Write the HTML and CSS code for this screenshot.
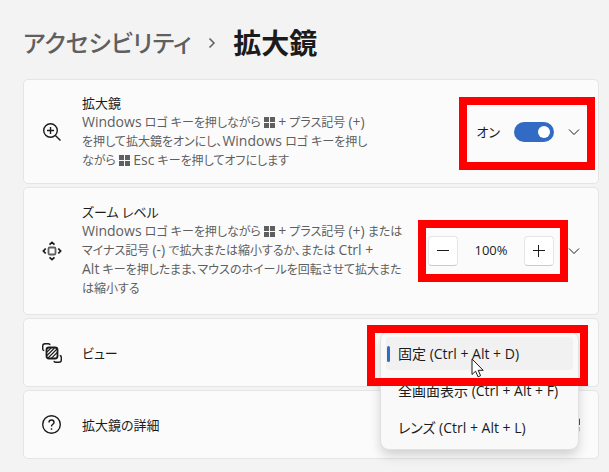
FILE: index.html
```html
<!DOCTYPE html>
<html lang="ja">

<head>
  <meta charset="utf-8">
  <title>拡大鏡</title>
  <meta name="viewport" content="width=device-width, initial-scale=1">
  <link rel="stylesheet" href="styles.css">
</head>

<body>
  <header class="breadcrumb">
    <a href="#">アクセシビリティ</a>
    <svg width="8" height="12" viewBox="0 0 8 12"><path d="M1.5 1.5 6 6 1.5 10.5" /></svg>
    <h1>拡大鏡</h1>
  </header>

  <main>
    <section class="card">
      <svg class="icon" width="20" height="20" viewBox="0 0 20 20">
        <circle cx="8.5" cy="8.5" r="6.8" />
        <path d="M13.4 13.4 18.5 18.5M8.5 5v7M5 8.5h7" />
      </svg>
      <div class="text">
        <label for="magnifier">拡大鏡</label>
        <p><span lang="en">Windows</span> ロゴ キーを押しながら <svg class="win" width="11" height="11" viewBox="0 0 11 11"><path d="M0 0h5v5H0zM6 0h5v5H6zM0 6h5v5H0zM6 6h5v5H6z" /></svg> <span lang="en">+</span> プラス記号 <span lang="en">(+)</span><br>
          を押して拡大鏡をオンにし、<span lang="en">Windows</span> ロゴ キーを押し<br>
          ながら <svg class="win" width="11" height="11" viewBox="0 0 11 11"><path d="M0 0h5v5H0zM6 0h5v5H6zM0 6h5v5H0zM6 6h5v5H6z" /></svg> <span lang="en">Esc</span> キーを押してオフにします</p>
      </div>
      <div class="controls">
        <span>オン</span>
        <input class="toggle" type="checkbox" id="magnifier" checked>
        <button class="expand" aria-label="展開"><svg width="12" height="8" viewBox="0 0 12 8"><path d="M1 1.5 6 6.5 11 1.5" /></svg></button>
        <div class="frame frame-toggle"></div>
      </div>
    </section>

    <section class="card tall">
      <svg class="icon" width="20" height="20" viewBox="0 0 20 20">
        <rect class="soft" x="6.5" y="6.5" width="7" height="7" rx="1.2" />
        <path class="arrows" d="M7.5 3.7 10 1.4l2.5 2.3M7.5 16.3 10 18.6l2.5-2.3M3.7 7.5 1.4 10l2.3 2.5M16.3 7.5 18.6 10l-2.3 2.5" />
      </svg>
      <div class="text">
        <h2>ズーム レベル</h2>
        <p><span lang="en">Windows</span> ロゴ キーを押しながら <svg class="win" width="11" height="11" viewBox="0 0 11 11"><path d="M0 0h5v5H0zM6 0h5v5H6zM0 6h5v5H0zM6 6h5v5H6z" /></svg> <span lang="en">+</span> プラス記号 <span lang="en">(+)</span> または<br>
          マイナス記号 <span lang="en">(-)</span> で拡大または縮小するか、または <span lang="en">Ctrl +</span><br>
          <span lang="en">Alt</span> キーを押したまま、マウスのホイールを回転させて拡大また<br>
          は縮小する</p>
      </div>
      <div class="controls">
        <button class="step" aria-label="縮小"><svg width="12" height="12" viewBox="0 0 12 12"><path d="M0 5.5h12" /></svg></button>
        <output>100%</output>
        <button class="step" aria-label="拡大"><svg width="12" height="12" viewBox="0 0 12 12"><path d="M0 5.5h12M5.5 0v12" /></svg></button>
        <button class="expand" aria-label="展開"><svg width="12" height="8" viewBox="0 0 12 8"><path d="M1 1.5 6 6.5 11 1.5" /></svg></button>
        <div class="frame frame-zoom"></div>
      </div>
    </section>

    <section class="card">
      <svg class="icon" width="20" height="20" viewBox="0 0 20 20">
        <path d="M2.5 7.5C1.2 7.5.7 7 .7 5.8V3Q.7.7 3 .7h3.2Q8 .7 8 2.2M17.5 12.5c1.3 0 1.8.5 1.8 1.7V17q0 2.3-2.3 2.3h-3.2q-1.8 0-1.8-1.5" />
        <rect class="halo" x="4.5" y="4.5" width="11" height="11" rx="2.5" />
        <rect class="heavy" x="4.5" y="4.5" width="11" height="11" rx="2.5" />
        <path class="hatch" d="M5 9 9 5M5 12.5 12.5 5M6 15 15 6M9.5 15.2 15.2 9.5" />
      </svg>
      <div class="text">
        <h2>ビュー</h2>
      </div>
      <div class="menu" role="listbox" aria-label="ビュー">
        <button role="option" aria-selected="true">固定 (Ctrl + Alt + D)</button>
        <button role="option">全画面表示 (Ctrl + Alt + F)</button>
        <button role="option">レンズ (Ctrl + Alt + L)</button>
      </div>
      <div class="frame frame-view"></div>
      <svg class="cursor" width="14" height="20" viewBox="0 0 14 20"><path d="M1 1v15.5l3.6-3.3L7 18.8l2.6-1.1-2.4-5.4h5z" /></svg>
    </section>

    <section class="card">
      <svg class="icon" width="20" height="20" viewBox="0 0 20 20">
        <circle cx="9.5" cy="9.5" r="8.8" />
        <path d="M7 7.5Q7 5 9.5 5T12 7.4C12 9.3 9.5 9.4 9.5 11.5M9.5 13.2v1.5" />
      </svg>
      <div class="text">
        <h2>拡大鏡の詳細</h2>
      </div>
      <div class="controls">
        <a class="external" href="#" aria-label="拡大鏡の詳細"><svg width="14" height="14" viewBox="0 0 14 14"><path d="M5 1.5H1.5v11h11V9M8 1.500h5V7M13 1.500 6.500 8" /></svg></a>
      </div>
    </section>
  </main>
</body>

</html>
```
FILE: styles.css
```css
body {
  margin: 0;
  padding: 23px 10px 13px 23px;
  background: #f3f3f3;
  color: #1b1b1b;
  font: 13px/19px "Open Sans", "Noto Sans CJK JP", sans-serif;
  font-feature-settings: "palt";
}

h1,
h2,
p {
  margin: 0;
}

button {
  padding: 0;
  border: 0;
  background: none;
  color: inherit;
  font: inherit;
  font-feature-settings: inherit;
}

svg {
  fill: none;
  stroke: #1b1b1b;
}

.breadcrumb {
  display: flex;
  align-items: center;
  gap: 17px;
  margin-bottom: 16px;
  font-size: 24px;
  line-height: 40px;
}

.breadcrumb a {
  color: #5f5f5f;
  font-weight: 500;
  text-decoration: none;
}

.breadcrumb svg {
  stroke: #5f5f5f;
  stroke-width: 1.5;
}

h1 {
  font-size: 28px;
  font-weight: bold;
}

main {
  display: flex;
  flex-direction: column;
  gap: 3px;
}

.card {
  position: relative;
  display: flex;
  align-items: center;
  gap: 20px;
  min-height: 40px;
  padding: 14px 18px 13px;
  border: 1px solid #e5e5e5;
  border-radius: 5px;
  background: #fbfbfb;
}

.tall {
  padding-top: 15px;
  padding-bottom: 16px;
}

.icon {
  flex: none;
  stroke-width: 1.4;
}

.icon .soft {
  stroke: #5f5f5f;
  stroke-width: 1.8;
}

.icon .arrows {
  stroke-width: 1.8;
}

.icon .halo {
  stroke: #fbfbfb;
  stroke-width: 4;
}

.icon .heavy {
  fill: #fbfbfb;
  stroke-width: 1.8;
}

.icon .hatch {
  stroke-width: 1.1;
}

.text {
  flex: 1;
  white-space: nowrap;
}

.text label,
.text h2 {
  display: block;
  font-size: inherit;
  font-weight: normal;
}

.text p {
  color: #5f5f5f;
  font-size: 12px;
}

/* latin words run a size larger than the kana around them */
.text p [lang="en"] {
  font-size: 14px;
  line-height: 1;
}

.win {
  vertical-align: -1px;
  fill: #5f5f5f;
  stroke: none;
}

.controls {
  position: absolute;
  right: 18px;
  display: flex;
  align-items: center;
  gap: 14px;
}

.toggle {
  appearance: none;
  width: 40px;
  height: 20px;
  margin: 0;
  padding: 4px;
  box-sizing: border-box;
  border-radius: 10px;
  background: #adadad;
}

.toggle::before {
  content: "";
  display: block;
  width: 12px;
  height: 12px;
  border-radius: 50%;
  background: white;
}

.toggle:checked {
  background: #316bc3;
}

.toggle:checked::before {
  margin-left: auto;
}

.expand {
  display: flex;
}

.step {
  display: flex;
  align-items: center;
  justify-content: center;
  width: 30px;
  height: 30px;
  border: 1px solid #e5e5e5;
  border-bottom-color: #cccccc;
  border-radius: 4px;
  background: white;
}

output {
  width: 38px;
  text-align: center;
}

.external {
  display: flex;
}

.external svg {
  stroke-width: 1.5;
}

.menu {
  position: absolute;
  top: 13px;
  right: 20px;
  z-index: 1;
  display: flex;
  flex-direction: column;
  gap: 4px;
  width: 187px;
  padding: 5px;
  border-radius: 8px;
  background: #f9f9f9;
  box-shadow: 0 0 0 1px #e0e0e0, 0 6px 12px rgba(0, 0, 0, .18);
  font-size: 14px;
}

.menu button {
  position: relative;
  height: 33px;
  padding-left: 12px;
  border-radius: 4px;
  text-align: left;
  white-space: nowrap;
}

.menu [aria-selected="true"] {
  background: #f1f1f1;
}

.menu [aria-selected="true"]::before {
  content: "";
  position: absolute;
  top: 9px;
  left: 1px;
  width: 3px;
  height: 16px;
  border-radius: 2px;
  background: #316bc3;
}

/* red callouts */
.frame {
  position: absolute;
  z-index: 2;
  box-sizing: border-box;
  border: 8px solid #ff0000;
  pointer-events: none;
}

.frame-toggle {
  top: -25px;
  right: -15px;
  width: 136px;
  height: 73px;
}

.frame-zoom {
  top: -16px;
  right: 12px;
  width: 150px;
  height: 62px;
}

.frame-view {
  top: 6px;
  right: 10px;
  width: 221px;
  height: 61px;
}

.cursor {
  position: absolute;
  top: 39px;
  right: 113px;
  z-index: 3;
  fill: white;
}
```
